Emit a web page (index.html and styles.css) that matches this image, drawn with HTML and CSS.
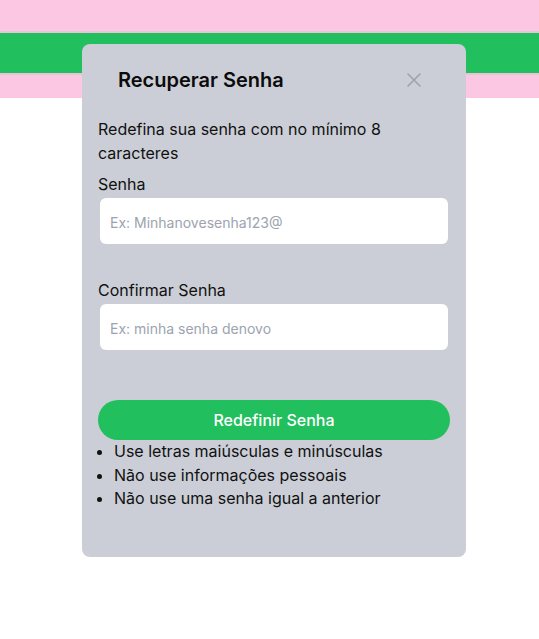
FILE: index.html
```html
<!DOCTYPE html>
<html lang="pt-BR">
<head>
<meta charset="utf-8">
<title>Recuperar Senha</title>
<link rel="stylesheet" href="styles.css">
</head>
<body>
<header class="top">
  <div class="band"></div>
</header>
<div class="modal">
  <div class="modal-head">
    <h2 class="modal-title">Recuperar Senha</h2>
    <button class="close" aria-label="Fechar">
      <svg width="14" height="14" viewBox="0 0 14 14"><path d="M1 1L13 13M13 1L1 13" stroke="#9ca3af" stroke-width="1.6" stroke-linecap="round"/></svg>
    </button>
  </div>
  <div class="modal-body">
    <p class="intro">Redefina sua senha com no mínimo 8 caracteres</p>
    <label class="label">Senha</label>
    <input class="field" type="password" placeholder="Ex: Minhanovesenha123@">
    <label class="label second">Confirmar Senha</label>
    <input class="field" type="password" placeholder="Ex: minha senha denovo">
    <button class="submit">Redefinir Senha</button>
    <ul class="rules">
      <li>Use letras maiúsculas e minúsculas</li>
      <li>Não use informações pessoais</li>
      <li>Não use uma senha igual a anterior</li>
    </ul>
  </div>
</div>
</body>
</html>
```
FILE: styles.css
```css
* { box-sizing: border-box; }
html, body { margin: 0; padding: 0; background: #fff; }
body { font-family: Inter, "Noto Sans", sans-serif; color: #111; }

.top {
  height: 98px;
  background: #fbc7e2;
  padding-top: 31px;
}
.band {
  height: 44px;
  background: #22bf5e;
  border-top: 2px solid #e8c3d6;
  border-bottom: 2px solid #e8c3d6;
}

.modal {
  position: absolute;
  top: 44px;
  left: 82px;
  width: 384px;
  height: 513px;
  background: #cbced6;
  border-radius: 8px;
}
.modal-head {
  display: flex;
  align-items: center;
  justify-content: space-between;
  padding: 22px 44px 0 36px;
}
.modal-title {
  margin: 0;
  font-size: 20px;
  line-height: 28px;
  font-weight: 600;
  color: #0b0b0b;
}
.close {
  border: 0;
  background: none;
  padding: 0;
  width: 16px;
  height: 16px;
  display: flex;
  align-items: center;
  justify-content: center;
}
.modal-body {
  padding: 23px 16px 0 16px;
  display: flex;
  flex-direction: column;
}
.intro {
  margin: 0;
  font-size: 16px;
  line-height: 24px;
  color: #111;
}
.label {
  display: block;
  margin-top: 7px;
  font-size: 16px;
  line-height: 24px;
  color: #111;
}
.label.second { margin-top: 34px; }
.field {
  margin: 2px 2px 0 2px;
  height: 46px;
  border: 0;
  border-radius: 6px;
  background: #fff;
  padding: 3px 10px 0 10px;
  font-family: Inter, sans-serif;
  font-size: 14px;
  color: #111;
  outline: none;
}
.field::placeholder { color: #9ca3af; }
.submit {
  margin-top: 50px;
  height: 40px;
  border: 0;
  border-radius: 20px;
  background: #22bf5e;
  color: #fff;
  font-family: Inter, sans-serif;
  font-size: 16px;
  font-weight: 500;
}
.rules {
  margin: 0;
  padding-left: 16px;
  font-size: 16px;
  line-height: 23.5px;
  color: #111;
}
```
